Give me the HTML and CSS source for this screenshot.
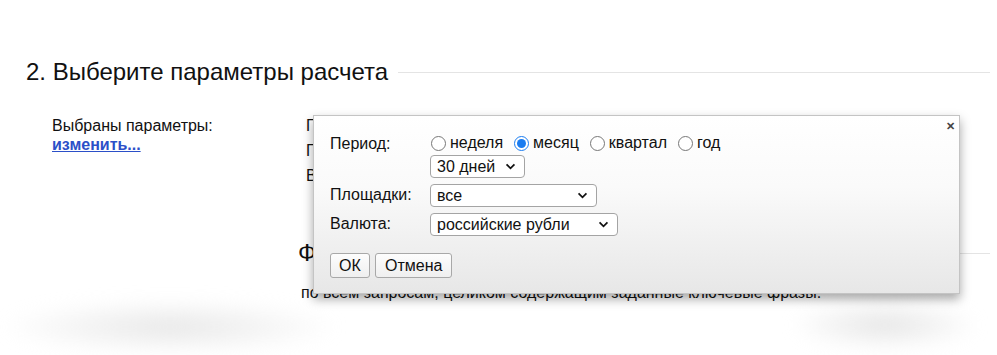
FILE: index.html
```html
<!DOCTYPE html>
<html lang="ru">
<head>
    <meta charset="UTF-8">
    <meta name="viewport" content="width=device-width, initial-scale=1.0">
    <title>Параметры расчета</title>
    <link rel="stylesheet" href="styles.css">
</head>
<body>
    <div class="page">
        <h2 class="step-title"><span>2. Выберите параметры расчета</span></h2>
        <div class="params">
            <div class="params-label">
                Выбраны параметры:<br>
                <a href="#" class="change-link">изменить...</a>
            </div>
            <div class="params-list">
                <div>Период: месяц (30 дней)</div>
                <div>Площадки: все</div>
                <div>Валюта: российские рубли</div>
            </div>
        </div>
        <div class="phrases">
            <h2 class="step-title"><span>Фразы для расчета</span></h2>
            <p>по всем запросам, целиком содержащим заданные ключевые фразы.</p>
        </div>
        <div class="fade"></div>

        <div class="dialog">
            <span class="dialog-close">&#x2715;</span>
            <form class="dialog-form">
                <div class="row">
                    <label class="row-label">Период:</label>
                    <div class="row-field">
                        <div class="radios">
                            <label><input type="radio" name="period"> неделя</label>
                            <label><input type="radio" name="period" checked> месяц</label>
                            <label><input type="radio" name="period"> квартал</label>
                            <label><input type="radio" name="period"> год</label>
                        </div>
                        <div class="select-wrap w-days">
                            <select><option>30 дней</option></select>
                            <svg class="chevron" viewBox="0 0 12 8"><path d="M1.5 1.5 L6 6 L10.5 1.5" /></svg>
                        </div>
                    </div>
                </div>
                <div class="row">
                    <label class="row-label">Площадки:</label>
                    <div class="select-wrap w-sites">
                        <select><option>все</option></select>
                        <svg class="chevron" viewBox="0 0 12 8"><path d="M1.5 1.5 L6 6 L10.5 1.5" /></svg>
                    </div>
                </div>
                <div class="row">
                    <label class="row-label">Валюта:</label>
                    <div class="select-wrap w-currency">
                        <select><option>российские рубли</option></select>
                        <svg class="chevron" viewBox="0 0 12 8"><path d="M1.5 1.5 L6 6 L10.5 1.5" /></svg>
                    </div>
                </div>
                <div class="buttons">
                    <button type="button" class="btn btn-ok">ОК</button>
                    <button type="button" class="btn">Отмена</button>
                </div>
            </form>
        </div>
    </div>
</body>
</html>
```

FILE: styles.css
```css
body {
    margin: 0;
    padding: 0;
    background: #fff;
    font-family: 'Liberation Sans', Arial, sans-serif;
    color: #111;
}
.page {
    position: relative;
    width: 997px;
    height: 355px;
    overflow: hidden;
    padding: 0 7px 0 26px;
    box-sizing: border-box;
}
.step-title {
    display: flex;
    align-items: center;
    gap: 10px;
    margin: 55px 0 0 0;
    font-size: 24px;
    font-weight: normal;
    line-height: 34px;
    color: #111;
}
.step-title::after {
    content: "";
    flex: 1;
    height: 1px;
    background: #e4e4e4;
}
.params {
    display: flex;
    margin-top: 24px;
    padding-left: 26px;
    font-size: 16px;
}
.params-label {
    width: 254px;
    padding-top: 3px;
    line-height: 19px;
}
.change-link {
    color: #2b4fc8;
    font-weight: bold;
    text-decoration: underline;
}
.params-list {
    line-height: 25px;
}
.phrases {
    margin-left: 272px;
}
.phrases .step-title {
    margin-top: 48px;
}
.phrases p {
    margin: 13px 0 0 3px;
    font-size: 16px;
    line-height: 20px;
}
.fade {
    height: 52px;
    margin: -4px -7px 0 -26px;
    background:
        radial-gradient(ellipse 170px 28px at 170px 28px, #e8e8e8, rgba(255,255,255,0)),
        radial-gradient(ellipse 95px 26px at 885px 26px, #e6e6e6, rgba(255,255,255,0));
    filter: blur(8px);
}

/* dialog */
.dialog {
    position: absolute;
    left: 313px;
    top: 115px;
    width: 647px;
    height: 179px;
    box-sizing: border-box;
    border: 1px solid #c4c4c4;
    background: linear-gradient(#fff 0%, #fafafa 40%, #e7e7e7 100%);
    box-shadow: 0 5px 10px rgba(0,0,0,0.35);
    padding: 17px 16px 0 16px;
    font-size: 16px;
}
.dialog-close {
    position: absolute;
    top: 4px;
    right: 4px;
    font-size: 11px;
    font-weight: bold;
    color: #444;
}
.dialog-form {
    display: flex;
    flex-direction: column;
}
.row {
    display: flex;
    align-items: flex-start;
    margin-bottom: 6px;
}
.row-label {
    width: 100px;
    line-height: 21px;
}
.row-field {
    display: flex;
    flex-direction: column;
    gap: 2px;
}
.radios {
    display: flex;
    gap: 10px;
    line-height: 20px;
}
.radios label {
    display: flex;
    align-items: center;
    gap: 4px;
}
.radios input {
    width: 15px;
    height: 15px;
    margin: 0 0 0 1px;
    accent-color: #1a7cf0;
}
.select-wrap {
    position: relative;
    height: 23px;
}
.select-wrap select {
    appearance: none;
    -webkit-appearance: none;
    width: 100%;
    height: 23px;
    box-sizing: border-box;
    border: 1px solid #a4a4a4;
    border-radius: 4px;
    background: #fff;
    font-family: inherit;
    font-size: 16px;
    color: #111;
    padding: 0 6px;
}
.chevron {
    position: absolute;
    right: 9px;
    top: 8px;
    width: 11px;
    height: 7px;
    fill: none;
    stroke: #111;
    stroke-width: 2;
}
.w-days { width: 95px; }
.w-sites { width: 167px; }
.w-currency { width: 188px; }
.buttons {
    display: flex;
    gap: 5px;
    margin-top: 11px;
}
.btn {
    height: 25px;
    padding: 0 9px;
    border: 1px solid #a8a8a8;
    border-radius: 3px;
    background: linear-gradient(#fdfdfd, #efefef);
    font-family: inherit;
    font-size: 16px;
    color: #111;
}
.btn-ok {
    width: 40px;
    padding: 0;
}
```
